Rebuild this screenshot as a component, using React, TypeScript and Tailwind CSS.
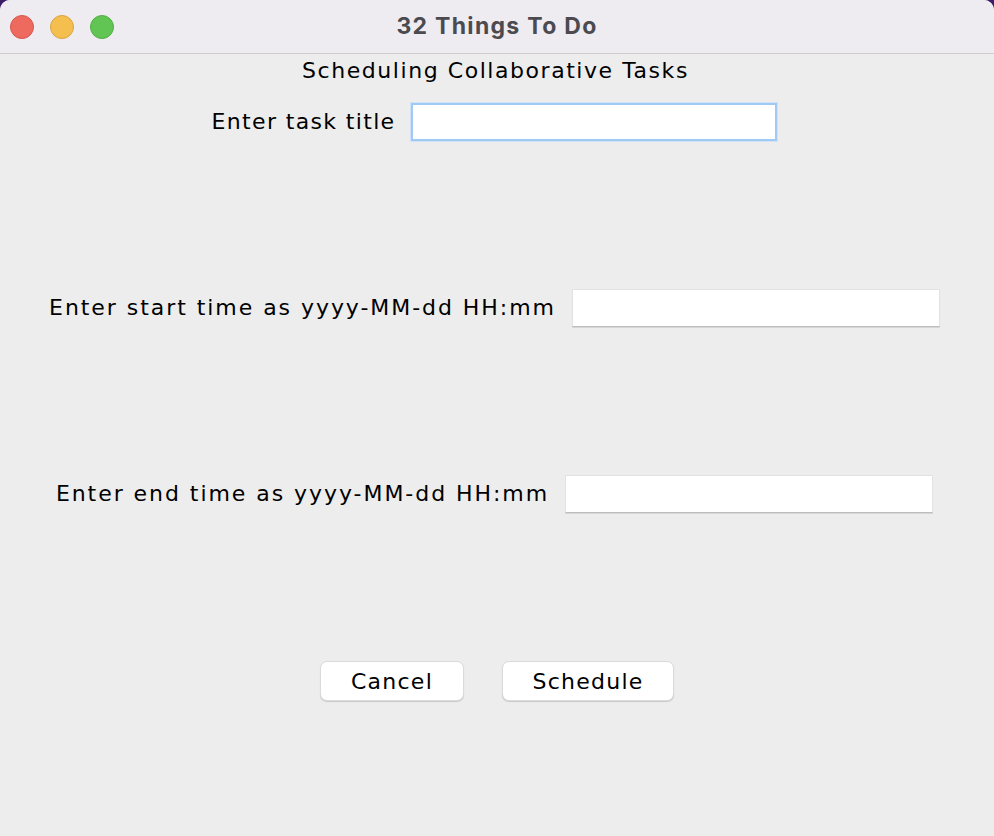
import React from 'react';

const TrafficLights: React.FC = () => (
  <div className="flex items-center gap-[16px] pl-[10px]">
    <span className="block w-[24px] h-[24px] rounded-full bg-[#ee6a5f] border border-[#d4574b]" />
    <span className="block w-[24px] h-[24px] rounded-full bg-[#f5bf4f] border border-[#d9a440]" />
    <span className="block w-[24px] h-[24px] rounded-full bg-[#61c554] border border-[#52ad46]" />
  </div>
);

interface FieldRowProps {
  label: string;
  focused?: boolean;
  wide?: boolean;
}

const FieldRow: React.FC<FieldRowProps> = ({ label, focused, wide }) => (
  <div className="flex items-center justify-center gap-[16px] pr-[5px]">
    <label
      className={`text-[22px] leading-[26px] text-black whitespace-nowrap ${wide ? 'tracking-[1.95px]' : 'tracking-[1.35px]'}`}
    >
      {label}
    </label>
    <input
      type="text"
      className={
        focused
          ? 'w-[366px] h-[38px] bg-white border-2 border-[#a0c9f6] shadow-[0_0_0_1px_#cfe2f8] outline-none'
          : 'w-[368px] h-[38px] bg-white border border-[#e2e2e2] border-b-[#bdbdbd] shadow-[0_1px_0_#d6d6d6] outline-none'
      }
    />
  </div>
);

export default function App() {
  return (
    <div className="w-[994px] h-[836px] bg-[#3a1d66] font-['DejaVu_Sans',sans-serif]">
      <div className="w-full h-full rounded-t-[10px] overflow-hidden bg-[#ededed] flex flex-col">
        <div className="relative h-[54px] shrink-0 bg-[#efecf1] border-b border-[#cfcdd2] flex items-center">
          <TrafficLights />
          <div className="absolute inset-0 flex items-center justify-center pb-[1px] font-['Inter',sans-serif] font-bold text-[23px] tracking-[1.3px] text-[#4b4a4f]">
            32 Things To Do
          </div>
        </div>

        <div className="flex flex-col pt-[4px]">
          <div className="text-center text-[22px] leading-[26px] tracking-[1.55px] text-black pr-[3px]">
            Scheduling Collaborative Tasks
          </div>

          <div className="flex flex-col gap-[148px] mt-[19px]">
            <FieldRow label="Enter task title" focused />
            <FieldRow label="Enter start time as yyyy-MM-dd HH:mm" wide />
            <FieldRow label="Enter end time as yyyy-MM-dd HH:mm" wide />
            <div className="flex justify-center gap-[38px]">
              <button className="w-[144px] h-[40px] bg-white rounded-[7px] border border-[#dadada] shadow-[0_1px_1px_rgba(0,0,0,0.15)] text-[22px] tracking-[1.25px] text-black">
                Cancel
              </button>
              <button className="w-[172px] h-[40px] bg-white rounded-[7px] border border-[#dadada] shadow-[0_1px_1px_rgba(0,0,0,0.15)] text-[22px] tracking-[1.25px] text-black">
                Schedule
              </button>
            </div>
          </div>
        </div>
      </div>
    </div>
  );
}
